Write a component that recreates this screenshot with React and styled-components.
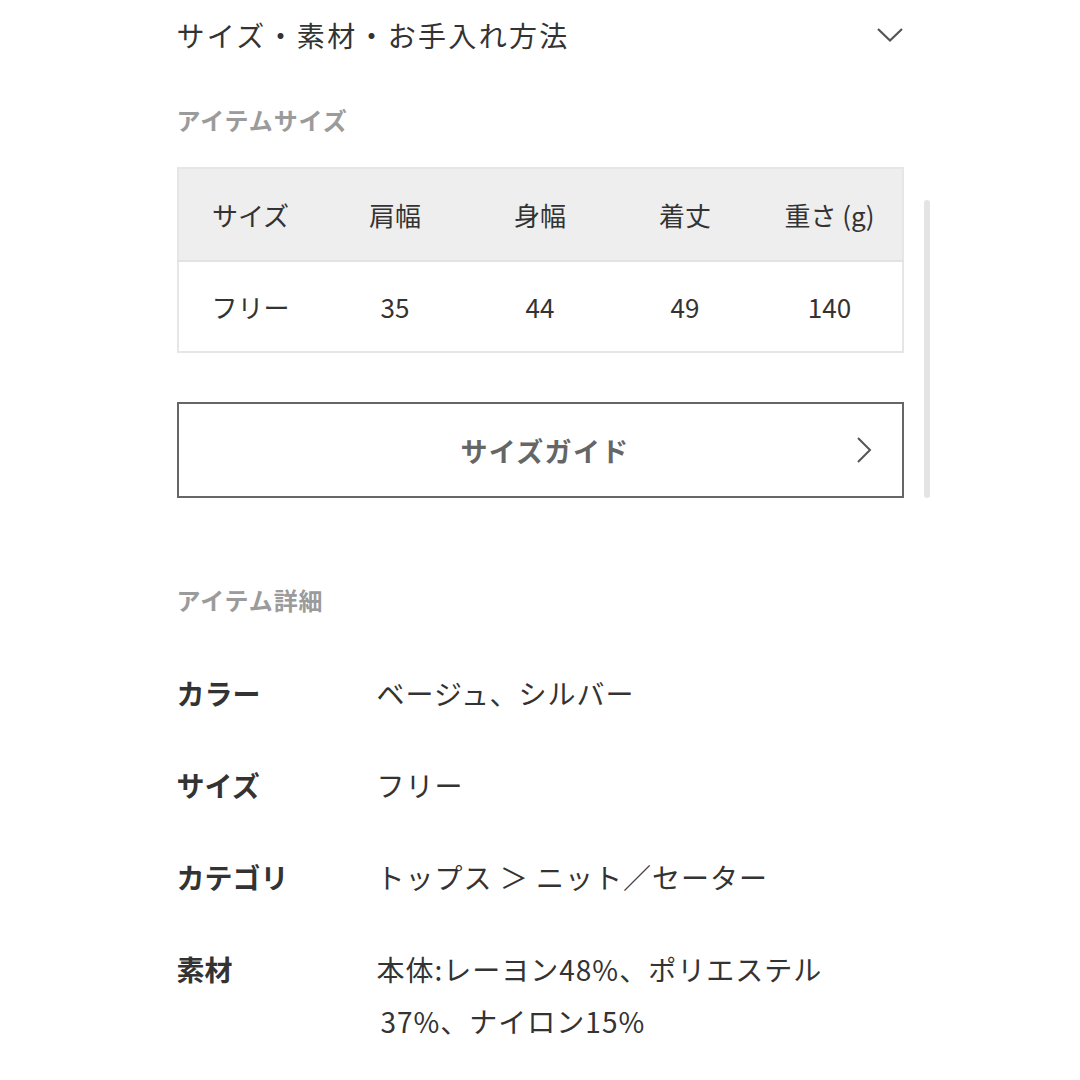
import React from "react";
import styled, { createGlobalStyle } from "styled-components";

const GlobalStyle = createGlobalStyle`
  body {
    margin: 0;
    background: #fff;
    font-family: "Noto Sans CJK JP", "Noto Sans", sans-serif;
    color: #333;
  }
`;

const sizeHead = ["サイズ", "肩幅", "身幅", "着丈", "重さ (g)"];
const sizeRow = ["フリー", "35", "44", "49", "140"];

const details = [
  { label: "カラー", value: ["ベージュ、シルバー"] },
  { label: "サイズ", value: ["フリー"] },
  { label: "カテゴリ", value: ["トップス ＞ ニット／セーター"] },
  { label: "素材", value: ["本体:レーヨン48%、ポリエステル", "37%、ナイロン15%"] },
];

function App() {
  return (
    <>
      <GlobalStyle />
      <Page>
        <Content>
          <Accordion>
            <AccordionTitle>サイズ・素材・お手入れ方法</AccordionTitle>
            <svg width="28" height="16" viewBox="0 0 28 16">
              <polyline points="2,2 14,13.5 26,2" fill="none" stroke="#555" strokeWidth="2.2" />
            </svg>
          </Accordion>

          <SectionLabel>アイテムサイズ</SectionLabel>
          <SizeTable>
            <thead>
              <tr>
                {sizeHead.map((h) => (
                  <HeadCell key={h}>{h}</HeadCell>
                ))}
              </tr>
            </thead>
            <tbody>
              <tr>
                {sizeRow.map((v, i) => (
                  <BodyCell key={i}>{v}</BodyCell>
                ))}
              </tr>
            </tbody>
          </SizeTable>

          <GuideButton>
            サイズガイド
            <GuideArrow width="16" height="28" viewBox="0 0 16 28">
              <polyline points="2,2 14,14 2,26" fill="none" stroke="#555" strokeWidth="2" />
            </GuideArrow>
          </GuideButton>

          <DetailLabel>アイテム詳細</DetailLabel>
          <DetailList>
            {details.map((d) => (
              <DetailRow key={d.label}>
                <DetailKey>{d.label}</DetailKey>
                <DetailValue>
                  {d.value.map((line, i) => (
                    <ValueLine key={i} $indent={i > 0}>{line}</ValueLine>
                  ))}
                </DetailValue>
              </DetailRow>
            ))}
          </DetailList>
        </Content>
        <ScrollThumb />
      </Page>
    </>
  );
}

const Page = styled.div`
  position: relative;
  width: 1080px;
  height: 1080px;
  overflow: hidden;
`;

const Content = styled.div`
  width: 727px;
  margin: 0 auto;
`;

const Accordion = styled.div`
  display: flex;
  align-items: center;
  justify-content: space-between;
  height: 70px;
`;

const AccordionTitle = styled.div`
  font-size: 28px;
  color: #333;
  letter-spacing: 2.3px;
`;

const SectionLabel = styled.div`
  margin-top: 31px;
  font-size: 24px;
  font-weight: 700;
  color: #9b9b9b;
  line-height: 38px;
  letter-spacing: 0.9px;
`;

const SizeTable = styled.table`
  margin-top: 28px;
  width: 100%;
  border-collapse: collapse;
  table-layout: fixed;
  border: 2px solid #e6e6e6;
`;

const HeadCell = styled.th`
  height: 91px;
  background: #eeeeee;
  font-weight: 400;
  font-size: 26px;
  color: #333;
  text-align: center;
  border-bottom: 2px solid #e2e2e2;
  padding: 0;
`;

const BodyCell = styled.td`
  height: 89px;
  font-size: 26px;
  color: #333;
  text-align: center;
  padding: 0;
`;

const GuideButton = styled.div`
  position: relative;
  margin-top: 49px;
  height: 92px;
  padding-left: 10px;
  border: 2px solid #666;
  display: flex;
  align-items: center;
  justify-content: center;
  font-size: 27px;
  font-weight: 700;
  color: #666;
  letter-spacing: 1.3px;
`;

const GuideArrow = styled.svg`
  position: absolute;
  right: 30px;
  top: 50%;
  transform: translateY(-50%);
`;

const DetailLabel = styled.div`
  margin-top: 83px;
  font-size: 24px;
  font-weight: 700;
  color: #9b9b9b;
  line-height: 38px;
  letter-spacing: 0.9px;
`;

const DetailList = styled.div`
  margin-top: 48px;
  display: flex;
  flex-direction: column;
  gap: 40px;
`;

const DetailRow = styled.div`
  display: grid;
  grid-template-columns: 200px 1fr;
  align-items: start;
  font-size: 28px;
  line-height: 52px;
`;

const DetailKey = styled.div`
  font-weight: 700;
  color: #333;
`;

const DetailValue = styled.div`
  color: #333;
  letter-spacing: 1px;
`;

const ValueLine = styled.div`
  padding-left: ${(p) => (p.$indent ? "4px" : "0")};
`;

const ScrollThumb = styled.div`
  position: absolute;
  left: 924px;
  top: 200px;
  width: 6px;
  height: 298px;
  border-radius: 3px;
  background: #e4e4e4;
`;

export default App;
